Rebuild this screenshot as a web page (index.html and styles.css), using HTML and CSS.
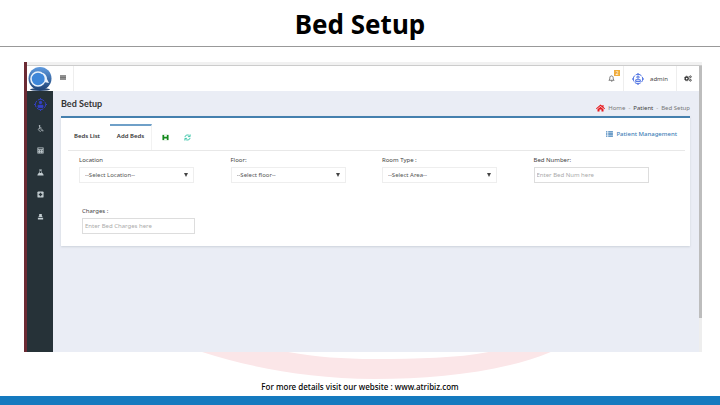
FILE: index.html
```html
<!DOCTYPE html>
<html lang="en">
<head>
  <meta charset="UTF-8">
  <meta name="viewport" content="width=device-width, initial-scale=1.0">
  <title>Bed Setup</title>
  <link rel="stylesheet" href="styles.css">
</head>
<body>
  <header class="slide-title">
    <h1>Bed Setup</h1>
  </header>

  <main class="window">
    <div class="browser-bar"></div>
    <div class="app">
      <nav class="sidebar">
        <a href="#" class="logo" aria-label="Logo">
          <svg viewBox="0 0 24 24">
            <defs>
              <linearGradient id="disc" x1="0" y1="0" x2="0" y2="1">
                <stop offset="0" stop-color="#5f9be0"/>
                <stop offset="1" stop-color="#1f4376"/>
              </linearGradient>
            </defs>
            <ellipse cx="12" cy="22.500" rx="10" ry="1.5" fill="#2b4a75"/>
            <circle cx="12" cy="11.5" r="11.500" fill="url(#disc)"/>
            <circle cx="10" cy="12" r="7" fill="#3e86d8" stroke="#e8f1fb" stroke-width="1.600"/>
            <path d="M15 6c3 1 4 4 4 6l2 4-5-1z" fill="#e8f1fb"/>
            <path d="M14 7c3 2 3 5 2 8l-3 2z" fill="#3e86d8"/>
          </svg>
        </a>
        <a href="#" class="side-link active" aria-label="Dashboard">
          <svg viewBox="0 0 16 16" fill="none" stroke="#3341c8" stroke-width="1.2">
            <circle cx="8" cy="8" r="6.300" stroke-dasharray="8.400 1.500" stroke-dashoffset="4"/>
            <circle cx="8" cy="5.500" r="1.5" fill="#3341c8"/>
            <path d="M5 11.500V9h6v2.500z" fill="#3341c8"/>
            <path d="M8 0v1.500M8 14.500V16M0 8h1.500M14.500 8H16"/>
          </svg>
        </a>
        <a href="#" class="side-link" aria-label="Patient">
          <svg viewBox="0 0 16 16" fill="none" stroke="#c3cdd1" stroke-width="1.500">
            <circle cx="6" cy="2" r="1.2" fill="#c3cdd1"/>
            <path d="M6 3v6h5l2 5 2-1M6 6h4M5 7a4 4 0 1 0 6 5"/>
          </svg>
        </a>
        <a href="#" class="side-link" aria-label="Billing">
          <svg viewBox="0 0 16 16" fill="#c3cdd1">
            <path fill-rule="evenodd" d="M1 1h14v14H1zM3 3v2h10V3zM3 7v1.500h2V7zM7 7v1.500h2V7zM11 7v1.500h2V7zM3 11v1.500h2V11zM7 11v1.500h2V11zM11 11v1.500h2V11z"/>
          </svg>
        </a>
        <a href="#" class="side-link" aria-label="Laboratory">
          <svg viewBox="0 0 16 16" fill="#c3cdd1">
            <path d="M5 1h6v2h-1v3l5 7v2H1v-2l5-7V3H5z"/>
            <path d="M7 4h2v3l1.500 2h-5L7 7z" fill="#263238"/>
          </svg>
        </a>
        <a href="#" class="side-link" aria-label="Pharmacy">
          <svg viewBox="0 0 16 16">
            <rect x="1" y="1" width="14" height="14" rx="2" fill="#c3cdd1"/>
            <path d="M6.500 4h3v2.500H12v3H9.500V12h-3V9.500H4v-3h2.500z" fill="#263238"/>
          </svg>
        </a>
        <a href="#" class="side-link" aria-label="Staff">
          <svg viewBox="0 0 16 16" fill="#c3cdd1">
            <path d="M5 2h6v4l2 3H3l2-3zM2 11h12v4H2z"/>
          </svg>
        </a>
      </nav>

      <div class="page">
        <div class="topbar">
          <button class="menu-button" aria-label="Toggle menu">
            <svg viewBox="0 0 6 5"><path d="M0 1h6M0 4h6" stroke="#222" stroke-width="1.200"/><path d="M0 2.500h6" stroke="#777" stroke-width="1"/></svg>
          </button>
          <button class="bell" aria-label="Notifications">
            <svg viewBox="0 0 16 16" fill="none" stroke="#444" stroke-width="1.600">
              <path d="M8 2C5 2 4 5 4 8c0 2-1 3-2 4h12c-1-1-2-2-2-4 0-3-1-6-4-6zM7 14h3"/>
            </svg>
            <span class="badge">2</span>
          </button>
          <a href="#" class="user">
            <svg viewBox="0 0 16 16" fill="none" stroke="#3f66e0" stroke-width="1.300">
              <circle cx="8" cy="8" r="6.300" stroke-dasharray="8.400 1.500" stroke-dashoffset="4"/>
              <circle cx="8" cy="5.500" r="1.500"/>
              <path d="M5 11.500V9h6v2.500zM8 0v1.500M8 14.500V16M0 8h1.500M14.500 8H16"/>
            </svg>
            admin
          </a>
          <button class="settings" aria-label="Settings">
            <svg viewBox="0 0 18 16" fill="none" stroke="#333">
              <circle cx="6" cy="8" r="3.500" stroke-width="3"/>
              <circle cx="6" cy="8" r="5.500" stroke-width="1.500" stroke-dasharray="2 2.300"/>
              <circle cx="14.500" cy="4" r="2" stroke-width="2"/>
              <circle cx="14.500" cy="12" r="2" stroke-width="2"/>
            </svg>
          </button>
        </div>

        <div class="content">
          <div class="content-header">
            <h2>Bed Setup</h2>
            <div class="breadcrumb">
              <svg viewBox="0 0 18 16" fill="#e8191c">
                <path d="M9 1L0 9l1 1.500L9 4l8 6.500L18 9l-3-3V2h-2v2z"/>
                <path d="M9 5.500L3 10.500V15h4v-4h4v4h4v-4.500z"/>
              </svg>
              <a href="#">Home</a>
              <span class="sep">-</span>
              <a href="#" class="strong">Patient</a>
              <span class="sep">-</span>
              <span>Bed Setup</span>
            </div>
          </div>

          <form class="card">
            <div class="tabs">
              <button type="button" class="tab">Beds List</button>
              <button type="button" class="tab selected">Add Beds</button>
              <button type="button" class="tool" aria-label="Save">
                <svg viewBox="0 0 16 16">
                  <path d="M1 2h14v12H1z" fill="#148a1c"/>
                  <path d="M5 2h6v4H5zM5 10h6v4H5z" fill="#fff"/>
                </svg>
              </button>
              <button type="button" class="tool" aria-label="Refresh">
                <svg viewBox="0 0 16 16" fill="none" stroke="#2fc1a4" stroke-width="2">
                  <path d="M2 7a6 6 0 0 1 11-2M14 9a6 6 0 0 1-11 2M14 1v5H9M2 15v-5h5"/>
                </svg>
              </button>
              <a href="#" class="manage">
                <svg viewBox="0 0 16 14" stroke="#3f7fb8" stroke-width="3">
                  <path d="M0 2h3M5 2h11M0 7h3M5 7h11M0 12h3M5 12h11"/>
                </svg>
                Patient Management
              </a>
            </div>
            <div class="fields">
              <div class="field">
                <label for="location">Location</label>
                <div class="select-box">
                  <select id="location"><option>--Select Location--</option></select>
                </div>
              </div>
              <div class="field">
                <label for="floor">Floor:</label>
                <div class="select-box">
                  <select id="floor"><option>--Select floor--</option></select>
                </div>
              </div>
              <div class="field">
                <label for="room">Room Type :</label>
                <div class="select-box">
                  <select id="room"><option>--Select Area--</option></select>
                </div>
              </div>
              <div class="field">
                <label for="bed">Bed Number:</label>
                <input type="text" id="bed" placeholder="Enter Bed Num here">
              </div>
              <div class="field charges">
                <label for="charges">Charges :</label>
                <input type="text" id="charges" placeholder="Enter Bed Charges here">
              </div>
            </div>
          </form>
        </div>
      </div>
      <div class="scrollbar"><div class="thumb"></div></div>
    </div>
  </main>

  <footer class="slide-footer">
    <svg class="arc" viewBox="0 0 352 28" preserveAspectRatio="none">
      <path d="M0 0C50 16 105 26 172 27C235 27 300 20 348 0H286C255 6 215 7 172 7C140 7 115 5 86 0Z" fill="#fbe6e8"/>
    </svg>
    <p>For more details visit our website : www.atribiz.com</p>
  </footer>
</body>
</html>
```

FILE: styles.css
```css
* {
  box-sizing: border-box;
}
body {
  margin: 0;
  min-height: 100vh;
  display: flex;
  flex-direction: column;
  background: #fff;
  color: #444;
  font-family: "Noto Sans", "Open Sans", sans-serif;
  font-size: 6px;
  line-height: 8px;
}
h1, h2, p {
  margin: 0;
}
a {
  color: inherit;
  text-decoration: none;
}
svg {
  display: block;
}
button {
  display: flex;
  align-items: center;
  padding: 0;
  border: none;
  background: none;
  color: inherit;
  font: inherit;
  cursor: pointer;
}

.slide-title {
  padding: 8px 0 6px;
  border-bottom: 1px solid #999;
  text-align: center;
}
.slide-title h1 {
  color: #000;
  font-size: 26px;
  line-height: 32px;
  font-weight: 700;
}

.window {
  flex: 1;
  display: flex;
  flex-direction: column;
  margin: 15px 18px 0 24px;
  border-left: 3px solid #6b2a33;
}
.browser-bar {
  height: 4px;
  background: #f1f1f1;
  border-bottom: 1px solid #ccc;
}
.app {
  flex: 1;
  display: flex;
}

.sidebar {
  width: 26px;
  background: #263238;
}
.logo {
  display: block;
  height: 25px;
  padding: 1px;
  background: #fff;
}
.logo svg {
  width: 24px;
  height: 24px;
}
.side-link {
  display: flex;
  align-items: center;
  justify-content: center;
  height: 22px;
}
.side-link svg {
  width: 7px;
  height: 7px;
}
.side-link.active {
  height: 26px;
}
.side-link.active svg {
  width: 13px;
  height: 13px;
}

.page {
  flex: 1;
  display: flex;
  flex-direction: column;
  background: #eaedf5;
}
.topbar {
  display: flex;
  height: 25px;
  background: #fff;
}
.menu-button {
  width: 21px;
  justify-content: center;
  padding-bottom: 3px;
  border-right: 1px solid #eee;
}
.menu-button svg {
  width: 6px;
  height: 5px;
}
.bell {
  position: relative;
  margin-left: auto;
  width: 24px;
  justify-content: center;
  border-right: 1px solid #eee;
}
.bell svg {
  width: 7px;
  height: 7px;
}
.badge {
  position: absolute;
  top: 4px;
  right: 3px;
  width: 6px;
  height: 6px;
  background: #f0ad3c;
  color: #fff;
  font-size: 5px;
  line-height: 6px;
  text-align: center;
}
.user {
  display: flex;
  align-items: center;
  gap: 6px;
  padding: 0 8px;
  border-right: 1px solid #eee;
}
.user svg {
  width: 12px;
  height: 12px;
}
.settings {
  width: 22px;
  justify-content: center;
}
.settings svg {
  width: 8px;
  height: 7px;
}

.content {
  padding: 6px 9px 8px 8px;
}
.content-header {
  display: flex;
  justify-content: space-between;
  align-items: center;
  height: 19px;
  padding-bottom: 5px;
}
.content-header h2 {
  color: #333;
  font-family: Lato, "Noto Sans", sans-serif;
  font-size: 9px;
  line-height: 12px;
  font-weight: 700;
}
.breadcrumb {
  display: flex;
  align-items: center;
  gap: 3px;
  padding-top: 8px;
  color: #777;
}
.breadcrumb svg {
  width: 9px;
  height: 8px;
}
.breadcrumb .strong {
  color: #444;
}
.breadcrumb .sep {
  color: #999;
}

.card {
  padding: 6px 5px 12px 7px;
  border-top: 2px solid #4580ae;
  background: #fff;
  box-shadow: 0 1px 2px #ccd2da;
}
.tabs {
  display: flex;
  height: 27px;
  border-bottom: 1px solid #e8e8e8;
}
.tab {
  width: 42px;
  justify-content: center;
  padding: 0 4px 4px 0;
  border-top: 2px solid transparent;
  color: #333;
  font-weight: 600;
}
.tab.selected {
  padding: 0 0 4px;
  border-top-color: #6fa0c8;
  border-right: 1px solid #f2f2f2;
}
.tool {
  width: 22px;
  justify-content: flex-end;
}
.tool svg {
  width: 7px;
  height: 7px;
}
.tool:nth-of-type(3) {
  width: 17px;
}
.manage {
  display: flex;
  align-items: center;
  gap: 3px;
  margin-left: auto;
  padding: 0 8px 6px 0;
  color: #3f7fb8;
  font-weight: 500;
}
.manage svg {
  width: 7px;
  height: 6px;
}

.fields {
  display: grid;
  grid-template-columns: repeat(4, 1fr);
  row-gap: 24px;
  padding: 5px 0 0 11px;
}
.field label {
  display: block;
  margin-bottom: 3px;
  color: #444;
}
.field input,
.field select {
  display: block;
  width: 100%;
  height: 16px;
  padding: 0 5px;
  border: 1px solid #ddd;
  border-radius: 0;
  background: #fff;
  color: #555;
  font: inherit;
  appearance: none;
}
.field select {
  border-color: #eee;
}
.field input,
.select-box {
  width: 76%;
}
.field input {
  padding: 0 2px;
}
.field input::placeholder {
  color: #aaa;
}
.charges {
  padding-left: 3px;
}
.select-box {
  position: relative;
}
.select-box::after {
  content: "";
  position: absolute;
  top: 6px;
  right: 6px;
  border: 2px solid transparent;
  border-top: 4px solid #444;
  border-bottom: none;
  pointer-events: none;
}

.scrollbar {
  width: 3px;
  background: #eee;
}
.thumb {
  height: 88%;
  background: #bdbdbd;
}

.slide-footer {
  position: relative;
  padding: 29px 0 3px;
  border-bottom: 9px solid #157abf;
  text-align: center;
}
.slide-footer p {
  position: relative;
  color: #000;
  font-size: 8px;
  line-height: 12px;
  font-weight: 500;
}
.arc {
  position: absolute;
  top: 0;
  left: 28%;
  width: 49%;
  height: 28px;
}
```
